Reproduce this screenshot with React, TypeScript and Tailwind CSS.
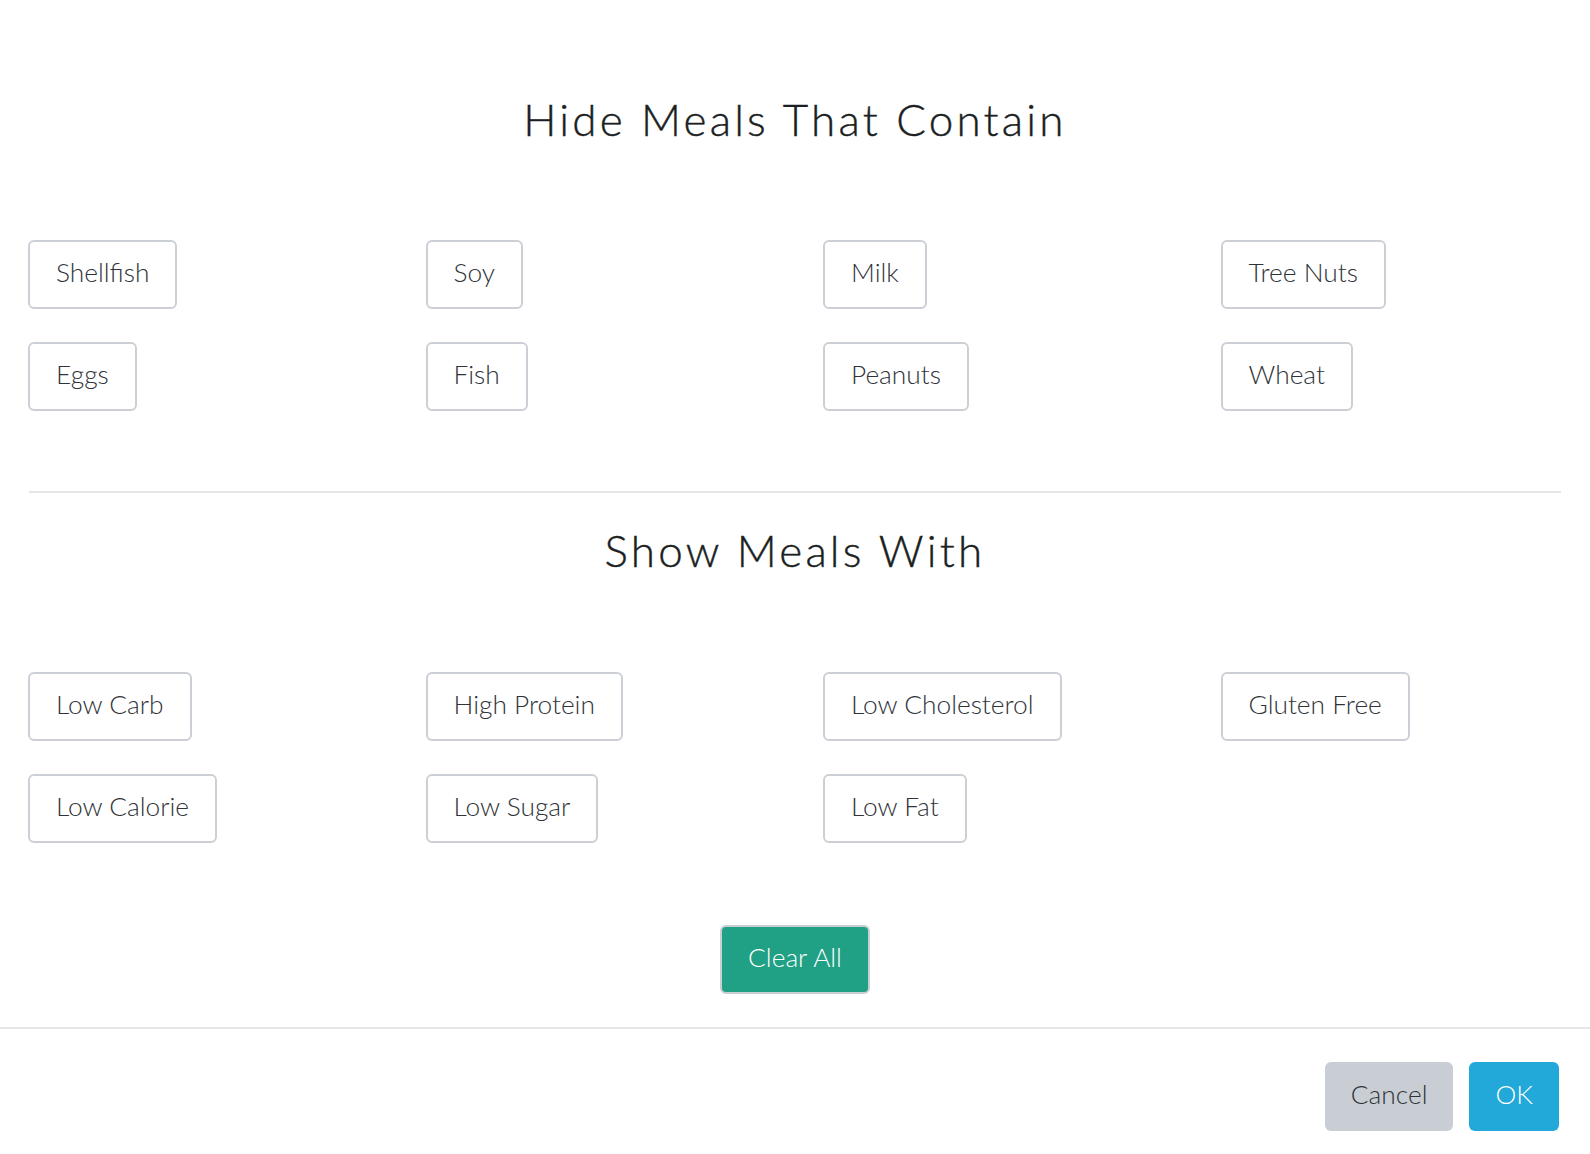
const hide = ["Shellfish", "Soy", "Milk", "Tree Nuts", "Eggs", "Fish", "Peanuts", "Wheat"];
const show = ["Low Carb", "High Protein", "Low Cholesterol", "Gluten Free", "Low Calorie", "Low Sugar", "Low Fat"];

function Chip({ label }: { label: string }) {
  return (
    <div className="pl-[28px]">
      <button className="h-[69px] px-[26px] pb-[5px] rounded-[6px] border-2 border-[#ccd0d6] bg-white text-[26.3px] font-light text-[#2f3338] leading-none">
        {label}
      </button>
    </div>
  );
}

function Heading({ children }: { children: string }) {
  return (
    <h2 className="text-center text-[44px] leading-[44px] tracking-[3.2px] text-[#1b1f23] font-light [-webkit-text-stroke:0.4px_#1b1f23]">
      {children}
    </h2>
  );
}

export default function App() {
  return (
    <div className="w-[1590px] h-[1154px] bg-white font-['Lato',sans-serif] flex flex-col">
      <div className="pt-[97px]">
        <Heading>Hide Meals That Contain</Heading>
      </div>
      <div className="mt-[99px] grid grid-cols-4 gap-y-[33px]">
        {hide.map((h) => (
          <Chip key={h} label={h} />
        ))}
      </div>
      <div className="mt-[80px] mx-[29px] h-[2px] bg-[#e6e6e6]" />
      <div className="mt-[35px]">
        <Heading>Show Meals With</Heading>
      </div>
      <div className="mt-[100px] grid grid-cols-4 gap-y-[33px]">
        {show.map((h) => (
          <Chip key={h} label={h} />
        ))}
      </div>
      <div className="mt-[82px] flex justify-center">
        <button className="h-[69px] px-[26px] pb-[5px] rounded-[6px] border-2 border-[#c9ced3] bg-[#20a084] text-[26.3px] font-light text-white leading-none">
          Clear All
        </button>
      </div>
      <div className="mt-[33px] h-[2px] bg-[#e3e7ea]" />
      <div className="pt-[33px] pr-[31px] flex justify-end gap-[16px]">
        <button className="h-[69px] px-[26px] pb-[5px] rounded-[6px] bg-[#c9ced5] text-[26.3px] font-light text-[#2f3338] leading-none">
          Cancel
        </button>
        <button className="h-[69px] px-[26px] pb-[5px] rounded-[6px] bg-[#22a8d9] text-[26.3px] font-light text-white leading-none">
          OK
        </button>
      </div>
    </div>
  );
}
